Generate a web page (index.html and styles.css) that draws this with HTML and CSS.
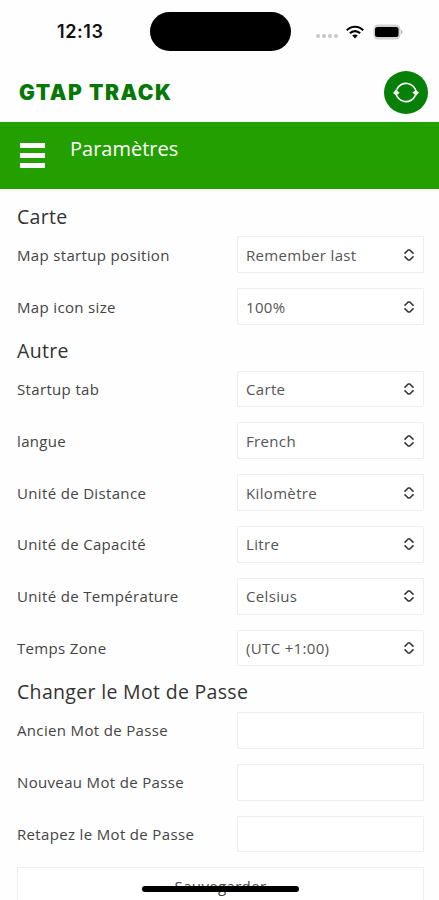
FILE: index.html
```html
<!DOCTYPE html>
<html lang="fr">
<head>
    <meta charset="UTF-8">
    <meta name="viewport" content="width=device-width, initial-scale=1.0">
    <title>GTAP TRACK</title>
    <link rel="stylesheet" href="styles.css">
</head>
<body>
    <!-- Phone status bar -->
    <div class="status-bar">
        <span class="time">12:13</span>
        <div class="island"></div>
        <div class="status-icons">
            <div class="dots"><i></i><i></i><i></i><i></i></div>
            <svg class="wifi" viewBox="0 0 18 14" width="18" height="14">
                <g fill="none" stroke="#000" stroke-width="2.2">
                    <path d="M0.8 5.2C5.3 0.6 12.7 0.6 17.2 5.2"/>
                    <path d="M3.9 8.2C6.8 5.3 11.2 5.3 14.1 8.2"/>
                </g>
                <path d="M9 13.4L6.2 10.5C7.8 9 10.2 9 11.8 10.5Z"/>
            </svg>
            <svg class="battery" viewBox="0 0 31 16" width="31" height="16">
                <rect x="0.5" y="0.5" width="27" height="15" rx="4.5" fill="#d2d2d2"/>
                <rect x="2" y="3" width="23.5" height="10" rx="2.5" fill="#000"/>
                <path d="M28 5.5Q31 8 28 10.5Z" fill="#bbb"/>
            </svg>
        </div>
    </div>

    <!-- App header -->
    <header class="app-header">
        <h1>GTAP TRACK</h1>
        <button class="refresh" aria-label="Actualiser">
            <svg viewBox="0 0 44 44" width="44" height="44">
                <g fill="none" stroke="#fff" stroke-width="1.7">
                    <path d="M12.6 18.8A10.2 10.2 0 0 1 32.2 21.5"/>
                    <path d="M31.4 24.2A10.2 10.2 0 0 1 11.8 21.5"/>
                </g>
                <path d="M12 18.6L15.6 22L12 24.2L9 22Z" fill="#fff"/>
                <path d="M32 24.8L28.4 21.6L32 19.2L35 21.6Z" fill="#fff"/>
            </svg>
        </button>
    </header>

    <nav class="title-bar">
        <div class="menu"><span></span><span></span><span></span></div>
        <h2>Paramètres</h2>
    </nav>

    <main class="settings">
        <h3>Carte</h3>
        <div class="row"><label>Map startup position</label><div class="select">Remember last<svg viewBox="0 0 12 14"><path d="M1.5 5.6L5.2 1.9H6.8L10.5 5.6M1.5 8.4L5.2 12.1H6.8L10.5 8.4"/></svg></div></div>
        <div class="row"><label>Map icon size</label><div class="select">100%<svg viewBox="0 0 12 14"><path d="M1.5 5.6L5.2 1.9H6.8L10.5 5.6M1.5 8.4L5.2 12.1H6.8L10.5 8.4"/></svg></div></div>

        <h3>Autre</h3>
        <div class="row"><label>Startup tab</label><div class="select">Carte<svg viewBox="0 0 12 14"><path d="M1.5 5.6L5.2 1.9H6.8L10.5 5.6M1.5 8.4L5.2 12.1H6.8L10.5 8.4"/></svg></div></div>
        <div class="row"><label>langue</label><div class="select">French<svg viewBox="0 0 12 14"><path d="M1.5 5.6L5.2 1.9H6.8L10.5 5.6M1.5 8.4L5.2 12.1H6.8L10.5 8.4"/></svg></div></div>
        <div class="row"><label>Unité de Distance</label><div class="select">Kilomètre<svg viewBox="0 0 12 14"><path d="M1.5 5.6L5.2 1.9H6.8L10.5 5.6M1.5 8.4L5.2 12.1H6.8L10.5 8.4"/></svg></div></div>
        <div class="row"><label>Unité de Capacité</label><div class="select">Litre<svg viewBox="0 0 12 14"><path d="M1.5 5.6L5.2 1.9H6.8L10.5 5.6M1.5 8.4L5.2 12.1H6.8L10.5 8.4"/></svg></div></div>
        <div class="row"><label>Unité de Température</label><div class="select">Celsius<svg viewBox="0 0 12 14"><path d="M1.5 5.6L5.2 1.9H6.8L10.5 5.6M1.5 8.4L5.2 12.1H6.8L10.5 8.4"/></svg></div></div>
        <div class="row"><label>Temps Zone</label><div class="select">(UTC +1:00)<svg viewBox="0 0 12 14"><path d="M1.5 5.6L5.2 1.9H6.8L10.5 5.6M1.5 8.4L5.2 12.1H6.8L10.5 8.4"/></svg></div></div>

        <h3>Changer le Mot de Passe</h3>
        <div class="row"><label for="old">Ancien Mot de Passe</label><input type="password" id="old"></div>
        <div class="row"><label for="new">Nouveau Mot de Passe</label><input type="password" id="new"></div>
        <div class="row"><label for="repeat">Retapez le Mot de Passe</label><input type="password" id="repeat"></div>

        <button class="save">Sauvegarder</button>
    </main>

    <!-- Home indicator -->
    <div class="home-bar"></div>
</body>
</html>
```
FILE: styles.css
```css
* {
    box-sizing: border-box;
}

body {
    margin: 0;
    height: 900px;
    overflow: hidden;
    background: #fefefe;
    color: #444;
    font-family: "Open Sans", sans-serif;
    font-size: 15px;
}

h1, h2, h3 {
    margin: 0;
    font-weight: 400;
}

button {
    padding: 0;
    border: none;
    font-family: inherit;
}

/* Status bar */
.status-bar {
    display: grid;
    grid-template-columns: 150px 141px 1fr;
    align-items: center;
    height: 63px;
}

.time {
    padding-left: 57px;
    font-family: Inter, sans-serif;
    font-size: 18px;
    font-weight: 600;
    letter-spacing: 0.6px;
    color: #111;
}

.island {
    height: 39px;
    border-radius: 20px;
    background: #000;
}

.status-icons {
    display: flex;
    align-items: center;
    padding-left: 25px;
}

.dots {
    display: flex;
    gap: 2px;
    margin: 9px 8px 0 0;
}

.dots i {
    width: 4px;
    height: 4px;
    border-radius: 50%;
    background: #c8c8c8;
}

.battery {
    margin-left: 9px;
}

/* Header */
.app-header {
    display: flex;
    justify-content: space-between;
    align-items: center;
    height: 59px;
    padding: 0 11px 0 19px;
}

.app-header h1 {
    font-family: Inter, sans-serif;
    font-size: 21px;
    font-weight: 900;
    letter-spacing: 1.55px;
    color: #067806;
}

.refresh {
    width: 44px;
    height: 43px;
    margin-bottom: 1px;
    border-radius: 50%;
    background: #078007;
}

.refresh svg {
    display: block;
}

.title-bar {
    display: flex;
    height: 67px;
    padding: 0 20px;
    background: #239f00;
}

.menu {
    display: flex;
    flex-direction: column;
    gap: 5px;
    width: 25px;
    margin: 21px 25px 0 0;
}

.menu span {
    height: 5px;
    background: #fff;
}

.title-bar h2 {
    margin-top: 13px;
    font-size: 20px;
    line-height: 28px;
    color: #fff;
}

/* Settings form */
.settings {
    padding: 16.8px 15px 0 17px;
}

.settings h3 {
    height: 30.6px;
    font-size: 19.5px;
    line-height: 22px;
    letter-spacing: 0.32px;
    color: #333;
}

.row {
    display: flex;
    justify-content: space-between;
    align-items: center;
    height: 36.8px;
    margin-bottom: 15px;
    line-height: 20px;
    letter-spacing: 0.34px;
}

.select,
.row input {
    display: flex;
    justify-content: space-between;
    align-items: center;
    width: 187px;
    height: 100%;
    padding: 0 8px;
    border: 1px solid #eee;
    border-radius: 1px;
    background: #fff;
    color: #555;
}

.select svg {
    width: 12px;
    height: 14px;
    fill: none;
    stroke: #333;
    stroke-width: 1.5;
}

.save {
    display: block;
    width: 100%;
    height: 38px;
    border: 1px solid #eee;
    background: #fff;
    font-size: 15px;
    letter-spacing: 0.34px;
    color: #444;
}

.home-bar {
    position: fixed;
    left: 142px;
    bottom: 8px;
    width: 157px;
    height: 6px;
    border-radius: 3px;
    background: #000;
}
```
